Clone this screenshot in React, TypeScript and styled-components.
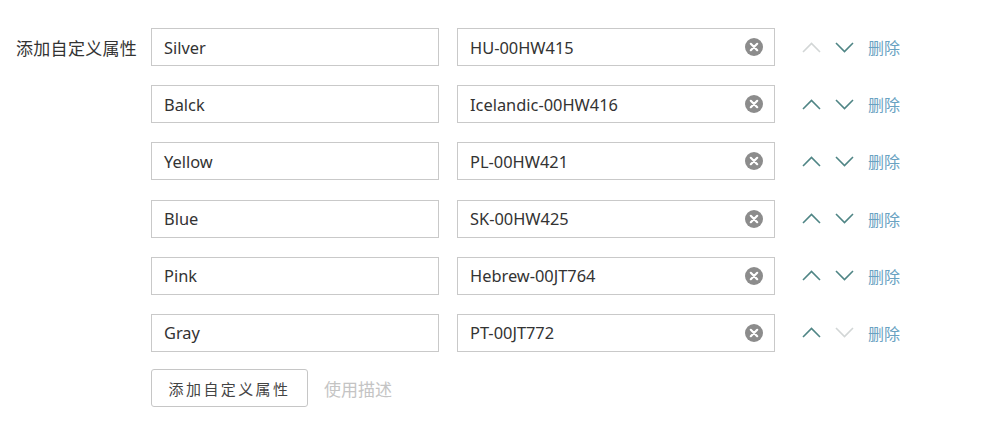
import React from "react";
import styled, { createGlobalStyle } from "styled-components";

const Global = createGlobalStyle`
  html, body { margin: 0; padding: 0; background: #fff; }
  body { font-family: "Noto Sans", "Noto Sans CJK SC", sans-serif; color: #333; }
`;

const Page = styled.div`
  display: grid;
  grid-template-columns: 135px auto;
  padding: 28px 0 0 16px;
`;

const Label = styled.div`
  height: 38px;
  display: flex;
  align-items: center;
  font-size: 17px;
  color: #333;
  letter-spacing: 0.3px;
`;

const Rows = styled.div`
  display: flex;
  flex-direction: column;
  gap: 19.2px;
`;

const Row = styled.div`
  display: flex;
  align-items: center;
  height: 38px;
`;

const Field = styled.div<{ $w: number }>`
  box-sizing: border-box;
  width: ${(p) => p.$w}px;
  height: 38px;
  border: 1px solid #c9c9c9;
  background: #fff;
  display: flex;
  align-items: center;
  padding: 0 11px 0 12px;
  font-size: 16.4px;
  color: #333;
  & + & { margin-left: 18px; }
`;

const FieldText = styled.span`
  flex: 1;
`;

const Actions = styled.div`
  display: flex;
  align-items: center;
  margin-left: 27px;
`;

const ArrowBtn = styled.span<{ $on: boolean }>`
  display: inline-flex;
  width: 19px;
  justify-content: center;
  color: ${(p) => (p.$on ? "#4f8585" : "#d2d6d6")};
  & + & { margin-left: 14px; }
`;

const Del = styled.span`
  margin-left: 14px;
  font-size: 16px;
  color: #6aa2c2;
`;

const Footer = styled.div`
  display: flex;
  align-items: center;
  margin-top: -2px;
`;

const Button = styled.button`
  box-sizing: border-box;
  width: 157px;
  height: 38px;
  border: 1px solid #c6c6c6;
  border-radius: 3px;
  background: #fff;
  font-family: inherit;
  font-size: 15px;
  letter-spacing: 2.4px;
  color: #444;
  padding: 0;
`;

const Hint = styled.span`
  margin-left: 16px;
  font-size: 17px;
  color: #c4c4c4;
`;

const ClearIcon = () => (
  <svg width="18" height="18" viewBox="0 0 18 18">
    <circle cx="9" cy="9" r="9" fill="#8c8c8c" />
    <path d="M5.8 5.8 L12.2 12.2 M12.2 5.8 L5.8 12.2" stroke="#fff" strokeWidth="2.2" strokeLinecap="round" />
  </svg>
);

const Chevron = ({ up }: { up: boolean }) => (
  <svg width="19" height="11" viewBox="0 0 19 11">
    <polyline
      points={up ? "1,10 9.5,1.5 18,10" : "1,1 9.5,9.5 18,1"}
      fill="none"
      stroke="currentColor"
      strokeWidth="1.6"
    />
  </svg>
);

const data = [
  ["Silver", "HU-00HW415"],
  ["Balck", "Icelandic-00HW416"],
  ["Yellow", "PL-00HW421"],
  ["Blue", "SK-00HW425"],
  ["Pink", "Hebrew-00JT764"],
  ["Gray", "PT-00JT772"],
];

export default function App() {
  return (
    <Page>
      <Global />
      <Label>添加自定义属性</Label>
      <Rows>
        {data.map(([a, b], i) => (
          <Row key={i}>
            <Field $w={288}>
              <FieldText>{a}</FieldText>
            </Field>
            <Field $w={318}>
              <FieldText>{b}</FieldText>
              <ClearIcon />
            </Field>
            <Actions>
              <ArrowBtn $on={i !== 0}>
                <Chevron up />
              </ArrowBtn>
              <ArrowBtn $on={i !== data.length - 1}>
                <Chevron up={false} />
              </ArrowBtn>
              <Del>删除</Del>
            </Actions>
          </Row>
        ))}
        <Footer>
          <Button>添加自定义属性</Button>
          <Hint>使用描述</Hint>
        </Footer>
      </Rows>
    </Page>
  );
}
